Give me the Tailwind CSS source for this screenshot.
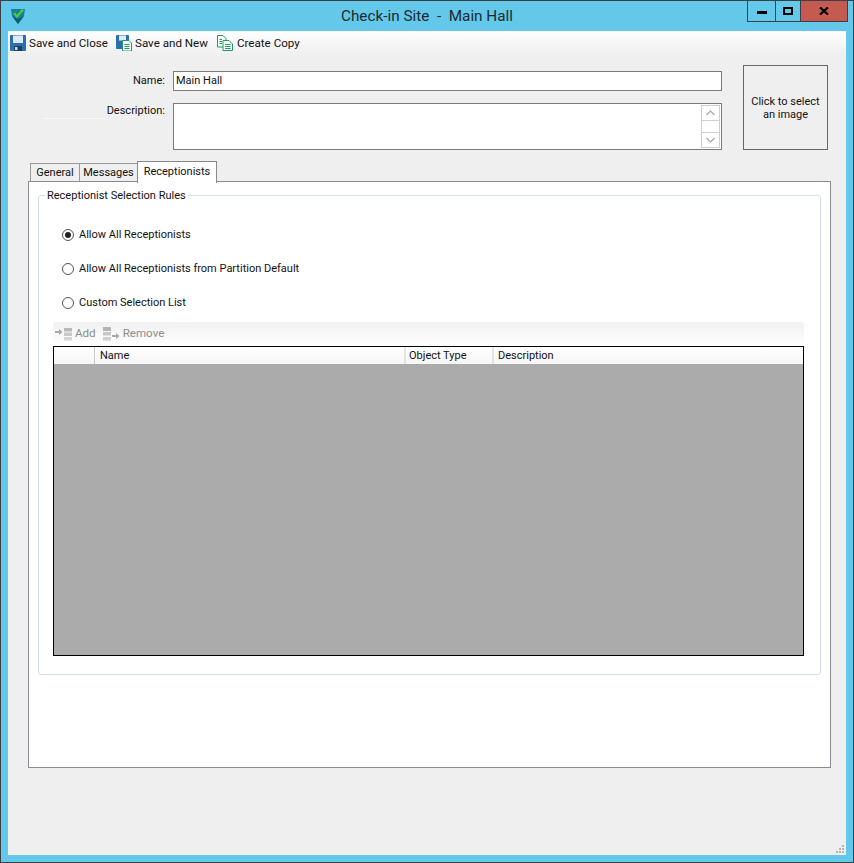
<!DOCTYPE html>
<html lang="en">
  <head>
    <meta charset="UTF-8" />
    <title>Check-in Site - Main Hall</title>
    <script src="https://cdn.jsdelivr.net/npm/@tailwindcss/browser@4"></script>
  </head>
  <body class="bg-[#63c8ea]">
    <div class="relative w-[854px] h-[863px] overflow-hidden flex flex-col border border-[#3b4044] bg-[#63c8ea] font-['Roboto',Arial,sans-serif] text-[11px] text-[#111] whitespace-nowrap">
      <!-- Title bar -->
      <div class="relative h-[30px] shrink-0 flex items-center justify-center text-[15.3px] text-[#1c2a30] whitespace-pre">
        <svg class="absolute left-[9px] top-[6px]" width="16" height="18" viewBox="0 0 16 18">
          <path d="M1 2 L15 2 L14 9 L8 17 L2 9 Z" fill="#13819a" />
          <path d="M8 12 L14 9 L8 17 L2 9 Z" fill="#0b5f78" />
          <path d="M4 6 L7 9.5 L13 2.5" fill="none" stroke="#55c23c" stroke-width="2.4" />
        </svg>
        <span class="mt-[1px]">Check-in Site  -  Main Hall</span>
        <!-- Window buttons -->
        <div class="absolute left-[746px] top-[-1px] flex h-[22px] border border-t-0 border-[#3b4044]">
          <div class="w-[28px] flex items-center justify-center border-r border-[#3b4044]">
            <div class="w-[10px] h-[3px] mt-[3px] bg-black"></div>
          </div>
          <div class="w-[25px] flex items-center justify-center border-r border-[#3b4044]">
            <div class="w-[10px] h-[8px] border-2 border-black"></div>
          </div>
          <div class="w-[46px] flex items-center justify-center bg-[#c55a50] text-black">
            <svg width="10" height="8" viewBox="0 0 10 8"><path d="M1 0.5 L9 7.5 M9 0.5 L1 7.5" stroke="#000" stroke-width="2.2" /></svg>
          </div>
        </div>
      </div>

      <!-- Client area -->
      <div class="relative mx-[7px] mb-[7px] flex-1 bg-[#efefef] flex flex-col">
        <!-- Toolbar -->
        <div class="h-[24px] shrink-0 flex items-center bg-gradient-to-b from-white to-[#efefef] text-[11.6px]">
          <div class="flex items-center ml-[2px] w-[106px]">
            <svg width="16" height="16" viewBox="0 0 16 16">
              <rect x="0" y="0" width="16" height="16" rx="1" fill="#2c6fb0" />
              <rect x="3" y="0.5" width="10" height="7.5" fill="#dcebf7" />
              <rect x="4" y="11" width="8" height="5" fill="#1c3f66" />
              <rect x="5" y="12" width="2.5" height="3" fill="#cfd8e2" />
            </svg>
            <span class="ml-[3px] mt-[1px]">Save and Close</span>
          </div>
          <div class="flex items-center w-[101px]">
            <svg width="16" height="16" viewBox="0 0 16 16">
              <rect x="0" y="0" width="13" height="14" rx="1" fill="#2c6fb0" />
              <rect x="3" y="0.5" width="7" height="5" fill="#dcebf7" />
              <path d="M6.5 5.5 H13 L15.5 8 V16 H6.5 Z" fill="#fff" stroke="#1f9a62" />
              <path d="M8.5 9.5 H13.5 M8.5 11.5 H13.5 M8.5 13.5 H13.5" stroke="#1f9a62" />
            </svg>
            <span class="ml-[3px] mt-[1px]">Save and New</span>
          </div>
          <div class="flex items-center">
            <svg width="16" height="16" viewBox="0 0 16 16">
              <path d="M0.5 0.5 H6 L9 3.5 V12 H0.5 Z" fill="#fff" stroke="#1f9a62" />
              <path d="M6 5.5 H12 L15.5 9 V15.5 H6 Z" fill="#fff" stroke="#1f9a62" />
              <path d="M8 9.5 H13.5 M8 11.5 H13.5 M8 13.5 H13.5" stroke="#1f9a62" />
              <path d="M2.5 4.5 H5 M2.5 6.5 H5 M2.5 8.5 H5" stroke="#1f9a62" />
            </svg>
            <span class="ml-[4px] mt-[1px]">Create Copy</span>
          </div>
        </div>

        <!-- Name / description / image -->
        <div class="flex h-[95px] shrink-0">
          <div class="w-[714px] pt-[16px]">
            <div class="flex h-[20px] items-center">
              <div class="w-[157px] text-right">Name:</div>
              <div class="ml-[8px] flex-1 h-full bg-white border border-[#7a7a7a] pl-[2px] flex items-center">Main Hall</div>
            </div>
            <div class="flex mt-[12px] h-[47px]">
              <div class="w-[157px] text-right">
                Description:
                <div class="ml-[35px] mt-[-2px] w-[62px] h-px bg-[#f9f9f9]"></div>
              </div>
              <div class="ml-[8px] flex-1 bg-white border border-[#7a7a7a] flex justify-end">
                <div class="w-[19px] m-[1px] flex flex-col border border-[#cfcfcf] bg-white">
                  <div class="h-[15px] flex items-center justify-center border-b border-[#cfcfcf]">
                    <svg width="9" height="6" viewBox="0 0 9 6"><path d="M0.5 5 L4.5 1 L8.5 5" fill="none" stroke="#a6a6a6" stroke-width="1.2" /></svg>
                  </div>
                  <div class="flex-1"></div>
                  <div class="h-[15px] flex items-center justify-center border-t border-[#cfcfcf]">
                    <svg width="9" height="6" viewBox="0 0 9 6"><path d="M0.5 1 L4.5 5 L8.5 1" fill="none" stroke="#a6a6a6" stroke-width="1.2" /></svg>
                  </div>
                </div>
              </div>
            </div>
          </div>
          <div class="ml-[21px] mt-[10px] w-[85px] h-[85px] border border-[#666] flex items-center justify-center text-center leading-[13px]">Click to select<br />an image</div>
        </div>

        <!-- Tabs -->
        <div class="relative z-10 flex items-end h-[22px] mt-[11px] ml-[22px] mb-[-2px] shrink-0">
          <div class="w-[50px] h-[18px] mb-[2px] pt-[2px] bg-[#efefef] border border-b-0 border-[#9a9a9a] flex items-center justify-center">General</div>
          <div class="w-[59px] h-[18px] mb-[2px] pt-[2px] ml-[-1px] bg-[#efefef] border border-b-0 border-[#9a9a9a] flex items-center justify-center">Messages</div>
          <div class="w-[80px] h-[22px] ml-[-1px] pb-[1px] bg-white border border-b-0 border-[#8a8a8a] flex items-center justify-center">Receptionists</div>
        </div>

        <!-- Tab page -->
        <div class="ml-[20px] w-[803px] h-[587px] shrink-0 bg-white border border-[#8b8b93] pt-[13px] pl-[9px]">
          <!-- Group box -->
          <div class="relative w-[783px] h-[480px] border border-[#d5dfe6] rounded-[3px] pt-[22px] pl-[23px]">
            <div class="absolute left-[6px] top-[-7px] px-[2px] bg-white leading-[14px]">Receptionist Selection Rules</div>
            <div class="flex items-center h-[34px]">
              <div class="w-[12px] h-[12px] rounded-full border border-[#555] flex items-center justify-center">
                <div class="w-[6px] h-[6px] rounded-full bg-[#222]"></div>
              </div>
              <span class="ml-[5px]">Allow All Receptionists</span>
            </div>
            <div class="flex items-center h-[34px]">
              <div class="w-[12px] h-[12px] rounded-full border border-[#555]"></div>
              <span class="ml-[5px]">Allow All Receptionists from Partition Default</span>
            </div>
            <div class="flex items-center h-[34px]">
              <div class="w-[12px] h-[12px] rounded-full border border-[#555]"></div>
              <span class="ml-[5px]">Custom Selection List</span>
            </div>

            <!-- Grid toolbar -->
            <div class="ml-[-9px] mt-[2px] w-[751px] h-[24px] flex items-center rounded-t-[3px] bg-gradient-to-b from-[#f1f1f1] to-white text-[#8c8c8c] text-[11.6px]">
              <svg class="ml-[2px]" width="17" height="14" viewBox="0 0 17 14">
                <path d="M0 4 H4 V2 L7.5 5 L4 8 V6 H0 Z" fill="#a8a8a8" />
                <rect x="9" y="1" width="8" height="3.5" fill="#b8b8b8" />
                <rect x="9" y="5.5" width="8" height="3.5" fill="#c8c8c8" />
                <rect x="9" y="10" width="8" height="3.5" fill="#d4d4d4" />
              </svg>
              <span class="ml-[3px]">Add</span>
              <svg class="ml-[7px]" width="17" height="14" viewBox="0 0 17 14">
                <rect x="0" y="0" width="8" height="4" fill="#b4b4b4" />
                <rect x="0" y="5" width="8" height="3.5" fill="#c8c8c8" />
                <rect x="0" y="10" width="8" height="3.5" fill="#d0d0d0" />
                <path d="M9 8 H13 V6 L16.5 9 L13 12 V10 H9 Z" fill="#a8a8a8" />
              </svg>
              <span class="ml-[3px]">Remove</span>
            </div>

            <!-- Grid -->
            <div class="ml-[-9px] w-[751px] h-[310px] border border-black bg-[#ababab]">
              <div class="flex h-[17px] bg-gradient-to-b from-white to-[#f5f5f5] items-center">
                <div class="w-[41px] h-full border-r border-[#c9c9c9]"></div>
                <div class="w-[311px] h-full pl-[5px] pt-[2px] border-r-2 border-[#e4e4e4] flex items-center">Name</div>
                <div class="w-[88px] h-full pl-[3px] pt-[2px] border-r-2 border-[#e4e4e4] flex items-center">Object Type</div>
                <div class="flex-1 h-full pl-[4px] pt-[2px] flex items-center">Description</div>
              </div>
            </div>
          </div>
        </div>

        <!-- Resize grip -->
        <svg class="absolute right-[1px] bottom-[1px]" width="10" height="10" viewBox="0 0 10 10" fill="#b5b5b5">
          <rect x="7" y="1" width="2" height="2" />
          <rect x="4" y="4" width="2" height="2" />
          <rect x="7" y="4" width="2" height="2" />
          <rect x="1" y="7" width="2" height="2" />
          <rect x="4" y="7" width="2" height="2" />
          <rect x="7" y="7" width="2" height="2" />
        </svg>
      </div>
    </div>
  </body>
</html>
